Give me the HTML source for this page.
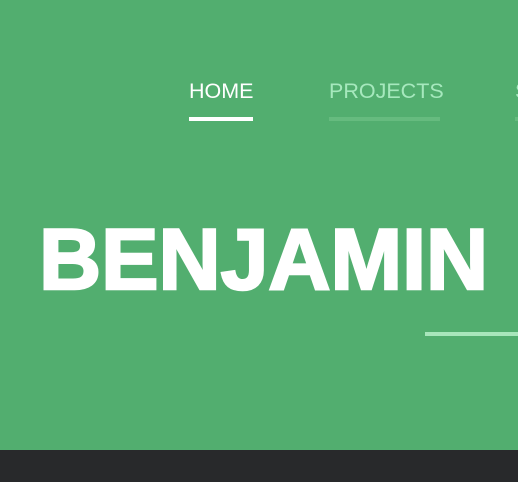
<!DOCTYPE html>
<html><head><style>
body{margin:0;width:518px;height:482px;overflow:hidden;background:#52ae6f;position:relative;font-family:"Liberation Sans",sans-serif}
.n{position:absolute;top:78px;font-size:21.5px;line-height:26px}
.u{position:absolute;top:117px;height:4px}
</style></head><body>
<div class="n" style="left:189px;color:#fff">HOME</div>
<div class="u" style="left:189px;width:64px;background:#fff"></div>
<div class="n" style="left:329px;color:#a6e8bd">PROJECTS</div>
<div class="u" style="left:329px;width:111px;background:#66bb7f"></div>
<div class="n" style="left:515px;color:#a6e8bd">S</div>
<div class="u" style="left:515px;width:10px;background:#66bb7f"></div>
<div style="position:absolute;left:39px;top:210px;font-size:86px;font-weight:bold;color:#fff;line-height:100px;letter-spacing:0px;-webkit-text-stroke:2.5px #fff">BENJAMIN</div>
<div style="position:absolute;left:425px;top:332px;width:93px;height:4px;background:#a8e6bb"></div>
<div style="position:absolute;left:0;top:450px;width:518px;height:32px;background:#28292b"></div>
</body></html>
